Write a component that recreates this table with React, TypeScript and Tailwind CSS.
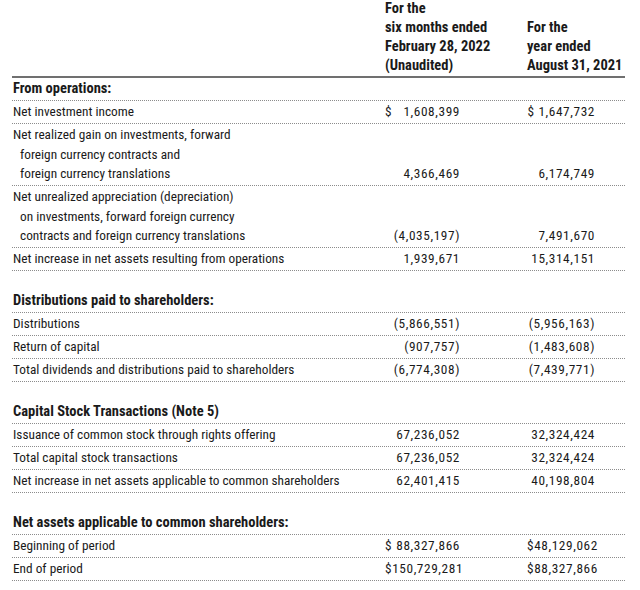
import React from "react";

type RowProps = {
  label: string[];
  a?: string;
  b?: string;
  bold?: boolean;
};

function Val1({ v }: { v?: string }) {
  if (!v) return <div className="w-[75px]" />;
  const neg = v.startsWith("(");
  if (v.startsWith("$ ")) {
    return (
      <div className="w-[75px] flex justify-between tracking-[0.6px]">
        <span>$</span>
        <span>{v.slice(2)}</span>
      </div>
    );
  }
  return (
    <div className={"w-[75px] text-right whitespace-nowrap tracking-[0.6px] " + (neg ? "-mr-[3px]" : "")}>
      {v}
    </div>
  );
}

function Val2({ v }: { v?: string }) {
  if (!v) return <div className="w-[68px]" />;
  const neg = v.startsWith("(");
  return (
    <div className={"w-[68px] text-right whitespace-nowrap tracking-[0.6px] " + (neg ? "-mr-[4px]" : "")}>
      {v}
    </div>
  );
}

function Row({ label, a, b, bold }: RowProps) {
  return (
    <div className="flex items-end border-b border-dotted border-[#8c8c8c] py-[1.25px] leading-[19.5px]">
      <div className={"w-[373px] pl-[1px] whitespace-nowrap " + (bold ? "font-bold text-[14.5px]" : "")}>
        {label.map((l, i) => (
          <div key={i} className={i > 0 ? "pl-[7px]" : ""}>
            {l}
          </div>
        ))}
      </div>
      <Val1 v={a} />
      <div className={a && a.startsWith("(") ? "w-[70px]" : "w-[67px]"} />
      <Val2 v={b} />
    </div>
  );
}

function Gap() {
  return <div className="h-[19px]" />;
}

export default function App() {
  return (
    <div className="w-[640px] h-[590px] bg-white text-[#1a1a1a] font-['Roboto_Condensed','Roboto',sans-serif] text-[13.3px] overflow-hidden">
      <div className="ml-[12px] w-[613px]">
        <div className="flex items-end h-[78px] border-b-2 border-[#707070] font-bold text-[14.5px] leading-[19px] pb-[1px]">
          <div className="w-[373px]" />
          <div className="w-[142px] whitespace-nowrap">
            <div>For the</div>
            <div>six months ended</div>
            <div>February 28, 2022</div>
            <div>(Unaudited)</div>
          </div>
          <div className="whitespace-nowrap">
            <div>For the</div>
            <div>year ended</div>
            <div>August 31, 2021</div>
          </div>
        </div>
        <Row label={["From operations:"]} bold />
        <Row label={["Net investment income"]} a="$ 1,608,399" b="$ 1,647,732" />
        <Row
          label={[
            "Net realized gain on investments, forward",
            "foreign currency contracts and",
            "foreign currency translations",
          ]}
          a="4,366,469"
          b="6,174,749"
        />
        <Row
          label={[
            "Net unrealized appreciation (depreciation)",
            "on investments, forward foreign currency",
            "contracts and foreign currency translations",
          ]}
          a="(4,035,197)"
          b="7,491,670"
        />
        <Row label={["Net increase in net assets resulting from operations"]} a="1,939,671" b="15,314,151" />
        <Gap />
        <Row label={["Distributions paid to shareholders:"]} bold />
        <Row label={["Distributions"]} a="(5,866,551)" b="(5,956,163)" />
        <Row label={["Return of capital"]} a="(907,757)" b="(1,483,608)" />
        <Row label={["Total dividends and distributions paid to shareholders"]} a="(6,774,308)" b="(7,439,771)" />
        <Gap />
        <Row label={["Capital Stock Transactions (Note 5)"]} bold />
        <Row label={["Issuance of common stock through rights offering"]} a="67,236,052" b="32,324,424" />
        <Row label={["Total capital stock transactions"]} a="67,236,052" b="32,324,424" />
        <Row label={["Net increase in net assets applicable to common shareholders"]} a="62,401,415" b="40,198,804" />
        <Gap />
        <Row label={["Net assets applicable to common shareholders:"]} bold />
        <Row label={["Beginning of period"]} a="$ 88,327,866" b="$48,129,062" />
        <Row label={["End of period"]} a="$150,729,281" b="$88,327,866" />
      </div>
    </div>
  );
}
